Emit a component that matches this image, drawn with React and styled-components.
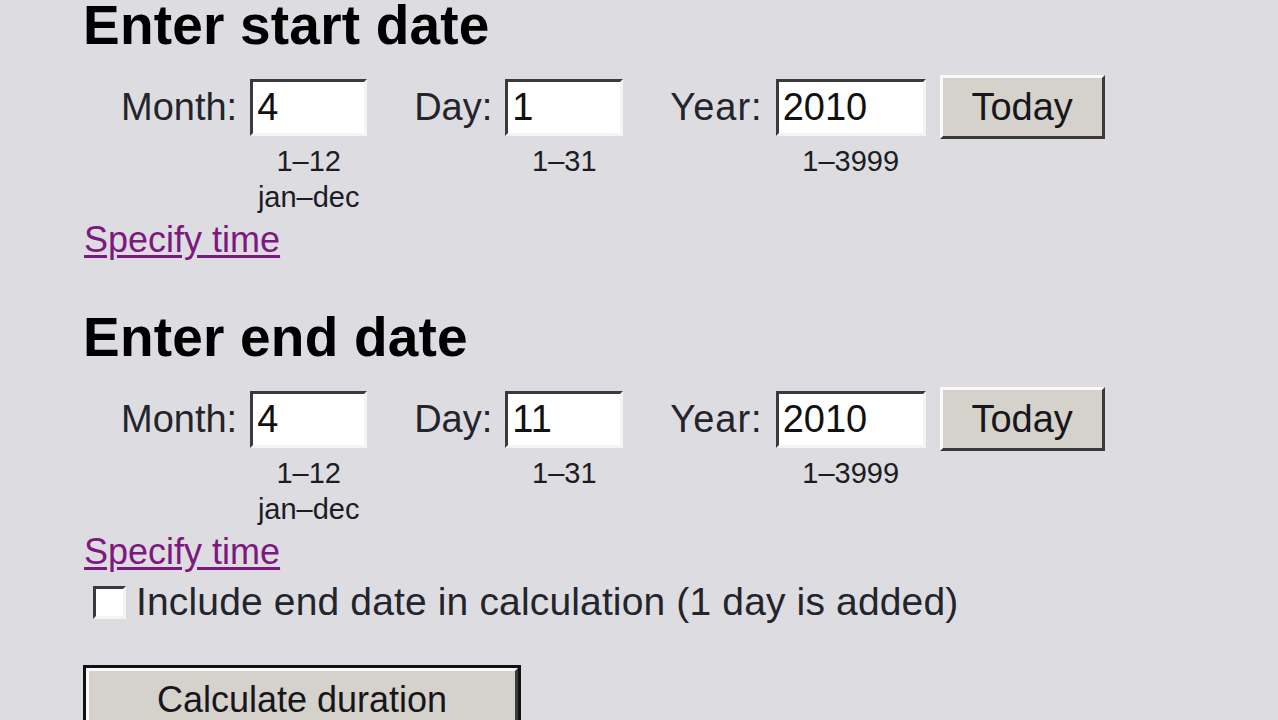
import React, { useState } from "react";
import styled, { createGlobalStyle } from "styled-components";

const GlobalStyle = createGlobalStyle`
	html, body {
		margin: 0;
		padding: 0;
		background: #dddde1;
	}
	body {
		font-family: "Liberation Sans", Arial, sans-serif;
		color: #1e1e24;
		overflow: hidden;
	}
`;

const Page = styled.div`
	padding: 0 0 0 83px;
	height: 720px;
	box-sizing: border-box;
`;

const Block = styled.section`
	margin-bottom: ${(props) => (props.$last ? "0" : "52px")};
`;

const Heading = styled.h2`
	margin: 0;
	font-size: 55px;
	line-height: 50px;
	letter-spacing: 0.2px;
	font-weight: bold;
	color: #000;
`;

const Row = styled.div`
	display: flex;
	align-items: flex-start;
	margin: 25px 0 0 38px;
`;

const Field = styled.div`
	display: flex;
	align-items: flex-start;
	gap: 13px;
	margin-right: ${(props) => (props.$tail ? "14px" : "47px")};
`;

const Label = styled.label`
	height: 64px;
	display: flex;
	align-items: center;
	font-size: 38px;
	letter-spacing: ${(props) => props.$spacing || 0}px;
	color: #24242c;
`;

const InputCol = styled.div`
	display: flex;
	flex-direction: column;
	align-items: center;
`;

const InputSlot = styled.div`
	height: 64px;
	display: flex;
	align-items: center;
`;

const TextInput = styled.input`
	box-sizing: border-box;
	width: ${(props) => props.$w}px;
	height: 57px;
	margin: 0;
	padding: 0 4px;
	font-family: "Liberation Sans", Arial, sans-serif;
	font-size: 38px;
	color: #111;
	background: #fff;
	border-style: solid;
	border-width: 3px;
	border-color: #3a3a3a #f4f4f4 #f4f4f4 #3a3a3a;
	outline: none;
`;

const Hints = styled.div`
	margin-top: 4px;
	font-size: 29px;
	line-height: 36px;
	text-align: center;
	color: #1c1c24;
`;

const Button = styled.button`
	box-sizing: border-box;
	width: ${(props) => props.$w}px;
	height: 64px;
	margin: 0;
	padding: 0;
	font-family: "Liberation Sans", Arial, sans-serif;
	font-size: ${(props) => props.$size || 38}px;
	color: #16161c;
	background: #d5d1cb;
	border-style: solid;
	border-width: 3px;
	border-color: #fafafa #3a3a3a #3a3a3a #fafafa;
	box-shadow: ${(props) => (props.$default ? "0 0 0 3px #111" : "none")};
	cursor: pointer;
`;

const SpecifyLink = styled.a`
	display: inline-block;
	margin: 5px 0 0 1px;
	font-size: 36px;
	line-height: 40px;
	color: #7e1880;
	text-decoration: underline;
	text-underline-offset: 3px;
`;

const CheckLine = styled.label`
	display: flex;
	align-items: center;
	gap: 10px;
	margin: 8px 0 0 10px;
	height: 44px;
	font-size: 39px;
	letter-spacing: 0.15px;
	color: #24242c;
`;

const Box = styled.input`
	appearance: none;
	box-sizing: border-box;
	width: 33px;
	height: 33px;
	margin: 0;
	background: #fff;
	border-style: solid;
	border-width: 3px;
	border-color: #3a3a3a #f4f4f4 #f4f4f4 #3a3a3a;
	&:checked::after {
		content: "✓";
		display: block;
		font-size: 24px;
		line-height: 27px;
		text-align: center;
	}
`;

const Submit = styled.div`
	margin: 44px 0 0 3px;
`;

function DateBlock({ title, date, last, children }) {
	const [month, setMonth] = useState(date.month);
	const [day, setDay] = useState(date.day);
	const [year, setYear] = useState(date.year);

	return (
		<Block $last={last}>
			<Heading>{title}</Heading>
			<Row>
				<Field>
					<Label>Month:</Label>
					<InputCol>
						<InputSlot>
							<TextInput $w={117} value={month} onChange={(e) => setMonth(e.target.value)} />
						</InputSlot>
						<Hints>
							1–12
							<br />
							jan–dec
						</Hints>
					</InputCol>
				</Field>
				<Field>
					<Label>Day:</Label>
					<InputCol>
						<InputSlot>
							<TextInput $w={118} value={day} onChange={(e) => setDay(e.target.value)} />
						</InputSlot>
						<Hints>1–31</Hints>
					</InputCol>
				</Field>
				<Field $tail>
					<Label $spacing={1}>Year:</Label>
					<InputCol>
						<InputSlot>
							<TextInput $w={150} value={year} onChange={(e) => setYear(e.target.value)} />
						</InputSlot>
						<Hints>1–3999</Hints>
					</InputCol>
				</Field>
				<Button $w={165}>Today</Button>
			</Row>
			<SpecifyLink href="#">Specify time</SpecifyLink>
			{children}
		</Block>
	);
}

export default function App() {
	const [includeEnd, setIncludeEnd] = useState(false);

	return (
		<Page>
			<GlobalStyle />
			<DateBlock title="Enter start date" date={{ month: "4", day: "1", year: "2010" }} />
			<DateBlock title="Enter end date" date={{ month: "4", day: "11", year: "2010" }} last>
				<CheckLine>
					<Box type="checkbox" checked={includeEnd} onChange={(e) => setIncludeEnd(e.target.checked)} />
					Include end date in calculation (1 day is added)
				</CheckLine>
				<Submit>
					<Button $w={432} $size={36} $default>
						Calculate duration
					</Button>
				</Submit>
			</DateBlock>
		</Page>
	);
}
